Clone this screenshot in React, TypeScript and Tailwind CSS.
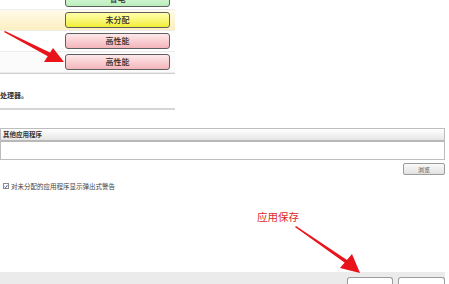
import React from 'react';

type Mode = {
    label: string,
    row: string,
    btn: string,
};

const modes: Mode[] = [
    { label: '省电', row: 'bg-white', btn: 'bg-gradient-to-b from-[#e6fbe6] to-[#b9eebb]' },
    { label: '未分配', row: 'bg-gradient-to-b from-[#fffbea] to-[#fbeec0]', btn: 'bg-gradient-to-b from-[#ffffa8] to-[#f2ee2a]' },
    { label: '高性能', row: 'bg-white', btn: 'bg-gradient-to-b from-[#fde9ea] to-[#f3b5bb]' },
    { label: '高性能', row: 'bg-[#fbfbfb]', btn: 'bg-gradient-to-b from-[#fde9ea] to-[#f3b5bb]' },
];

const ModeRow = ({ label, row, btn }: Mode) => (
    <div className={`flex items-center justify-end h-[21px] pr-[5px] border-b border-[#ececec] ${row}`}>
        <div className={`flex items-center justify-center w-[105px] h-[16px] rounded-[3px] border border-[#5f5f5f] text-[8px] font-medium text-[#2a2a2a] ${btn}`}>
            {label}
        </div>
    </div>
);

const App = () => {
    return (
        <div className="relative w-[449px] h-[284px] overflow-hidden bg-white font-['Noto_Sans_CJK_SC',sans-serif] text-[#222]">
            <div className="flex flex-col w-[445px] h-full">
                {/* mode list, cut off at top */}
                <div className="flex flex-col w-[175px] -mt-[11px] border-b border-[#cfcfcf]">
                    {modes.map((m, i) => <ModeRow key={i} {...m} />)}
                </div>

                <div className="mt-[16px] h-[10px] leading-[10px] text-[7px] font-bold text-[#333]">处理器。</div>
                <div className="mt-[8px] w-[175px] h-[2px] bg-[#d6d6d6]" />

                {/* other apps group */}
                <div className="mt-[18px] flex flex-col h-[32px] border border-[#bdbdbd]">
                    <div className="flex items-center h-[13px] px-[2px] border-b-2 border-[#b8b8b8] bg-gradient-to-b from-[#ffffff] to-[#e6e6e6] text-[6.5px] font-bold text-[#333]">
                        其他应用程序
                    </div>
                    <div className="flex-1 bg-white" />
                </div>

                <div className="mt-[3px] flex justify-end">
                    <div className="flex items-center justify-center w-[42px] h-[12px] rounded-[2px] border border-[#9a9a9a] bg-gradient-to-b from-[#fafafa] to-[#e2e2e2] text-[6px] text-[#555]">
                        浏览
                    </div>
                </div>

                <div className="mt-[7px] flex items-center gap-[2px] pl-[3px] h-[8px]">
                    <div className="flex items-center justify-center w-[6px] h-[6px] border border-[#8a8a8a] bg-white">
                        <svg width="5" height="5" viewBox="0 0 5 5">
                            <path d="M0.8 2.6 L2 3.9 L4.3 0.8" fill="none" stroke="#2447a8" strokeWidth="1.1" />
                        </svg>
                    </div>
                    <span className="text-[6.5px] leading-none text-[#444]">对未分配的应用程序显示弹出式警告</span>
                </div>

                <div className="mt-auto flex justify-end items-end gap-[5px] h-[12px] bg-[#ebebeb]">
                    <div className="w-[46px] h-[7px] rounded-t-[3px] border border-b-0 border-[#9c9c9c] bg-white" />
                    <div className="w-[47px] h-[7px] rounded-t-[3px] border border-b-0 border-[#9c9c9c] bg-white" />
                </div>
            </div>

            {/* annotation */}
            <span className="absolute left-[257px] top-[212px] text-[10.5px] leading-none text-[#e0282b]">应用保存</span>

            <svg className="absolute inset-0 pointer-events-none" width="449" height="284" viewBox="0 0 449 284">
                <polygon points="4,32 5,31 53,54 51,58" fill="#e8141a" />
                <polygon points="64,62 44,62 53,48" fill="#e8141a" />
                <polygon points="295,227 296,226 350,262 348,265" fill="#e8141a" />
                <polygon points="360,273 340,268 352,254" fill="#e8141a" />
            </svg>
        </div>
    );
};

export default App;
